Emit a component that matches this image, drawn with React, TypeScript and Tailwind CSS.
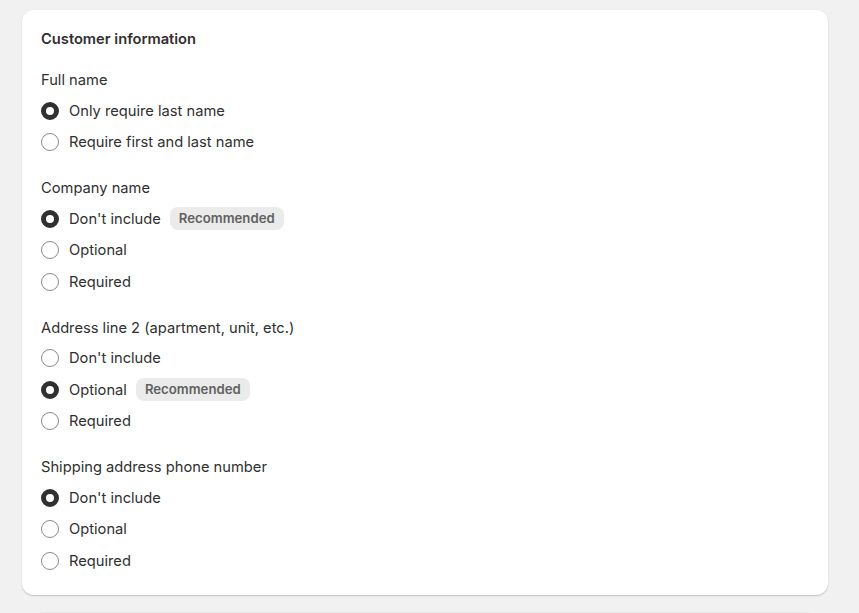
import { useState } from 'react';

interface Group {
  id: string;
  label: string;
  options: string[];
  recommended?: string;
  initial: string;
}

const groups: Group[] = [
  {
    id: 'fullName',
    label: 'Full name',
    options: ['Only require last name', 'Require first and last name'],
    initial: 'Only require last name',
  },
  {
    id: 'company',
    label: 'Company name',
    options: ["Don't include", 'Optional', 'Required'],
    recommended: "Don't include",
    initial: "Don't include",
  },
  {
    id: 'address2',
    label: 'Address line 2 (apartment, unit, etc.)',
    options: ["Don't include", 'Optional', 'Required'],
    recommended: 'Optional',
    initial: 'Optional',
  },
  {
    id: 'phone',
    label: 'Shipping address phone number',
    options: ["Don't include", 'Optional', 'Required'],
    initial: "Don't include",
  },
];

function Radio({ checked }: { checked: boolean }) {
  return (
    <span
      className={`w-[18px] h-[18px] rounded-full shrink-0 bg-white box-border ${
        checked ? 'border-[5px] border-[#303030]' : 'border border-[#8a8a8a]'
      }`}
    />
  );
}

export default function App() {
  const [values, setValues] = useState<Record<string, string>>(
    Object.fromEntries(groups.map((g) => [g.id, g.initial]))
  );

  return (
    <div
      className="min-h-[613px] bg-[#f1f1f1] pt-[10px] pl-[22px] pr-[31px] text-[14.7px] text-[#303030] overflow-hidden"
      style={{ fontFamily: 'Inter, "Noto Sans", sans-serif' }}
    >
      <div className="bg-white rounded-[12px] shadow-[0_1px_0_0_rgba(26,26,26,0.07),0_1px_2px_0_rgba(26,26,26,0.15)] px-[19px] pt-[19px] pb-[18px]">
        <h2 className="font-semibold leading-[20px]">Customer information</h2>

        <div className="flex flex-col gap-[20px] mt-[21px]">
          {groups.map((g) => (
            <div key={g.id}>
              <p className="leading-[20px]">{g.label}</p>
              <div className="mt-[5px] flex flex-col">
                {g.options.map((opt) => (
                  <label
                    key={opt}
                    className="h-[31.5px] flex items-center gap-[10px] cursor-pointer"
                    onClick={() => setValues((v) => ({ ...v, [g.id]: opt }))}
                  >
                    <Radio checked={values[g.id] === opt} />
                    <span className="leading-[20px]">{opt}</span>
                    {g.recommended === opt && (
                      <span className="ml-[-1px] px-[9px] h-[23px] flex items-center rounded-[8px] bg-[#ebebeb] text-[#616161] text-[13.2px] font-semibold">
                        Recommended
                      </span>
                    )}
                  </label>
                ))}
              </div>
            </div>
          ))}
        </div>
      </div>

      {/* next card peeking in */}
      <div className="mt-[17px] mx-[10px] h-[20px] bg-[#f4f4f4] rounded-t-[12px] border-t border-[#e6e6e6]" />
    </div>
  );
}
